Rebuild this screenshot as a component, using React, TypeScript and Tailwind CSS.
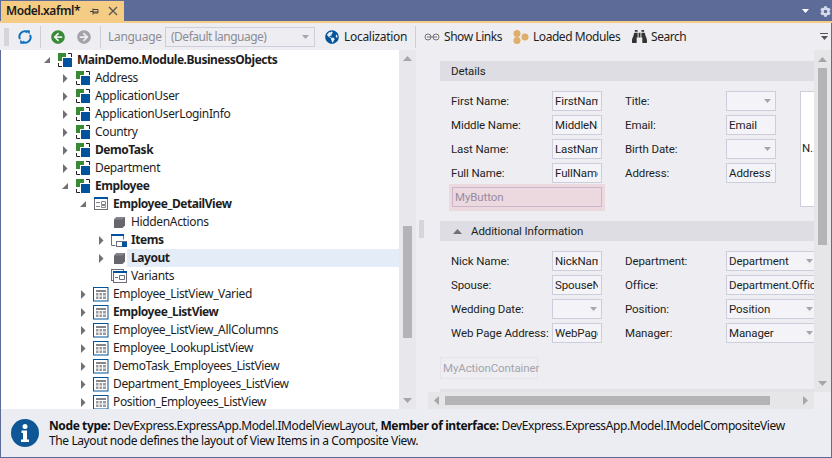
import React from 'react';
import { FaArrowCircleLeft, FaArrowCircleRight, FaBinoculars, FaCog, FaGlobeAmericas } from 'react-icons/fa';

const ClassIcon = () => (
  <svg width="16" height="16" viewBox="0 0 16 16">
    <rect x="1" y="1" width="8" height="8" fill="#388a34" />
    <path d="M11 1.500h3.500V5M1.500 11v3.500H5" fill="none" stroke="#222" />
    <rect x="5" y="5" width="10" height="10" fill="#fff" />
    <rect x="6" y="6" width="9" height="9" fill="#00539c" />
  </svg>
);

const DetailIcon = () => (
  <svg width="16" height="16" viewBox="0 0 16 16">
    <rect x="1.500" y="1.500" width="13" height="12" fill="#fff" stroke="#6d6d78" />
    <rect x="1" y="1" width="14" height="2" fill="#00539c" />
    <path d="M3 6.500h4M3 10.500h4M8.500 5.500h4v3h-4zM8.500 9.500h4v2h-4z" fill="none" stroke="#85858c" />
  </svg>
);

const CubeIcon = () => (
  <svg width="16" height="16" viewBox="0 0 16 16">
    <path d="M3 5.500L5.500 3H14v8.500L11.500 14H3z" fill="#66666c" />
    <path d="M3 5.500L5.500 3H14l-2.500 2.500z" fill="#85858c" />
  </svg>
);

const ItemsIcon = () => (
  <svg width="16" height="16" viewBox="0 0 16 16">
    <path d="M.5 13.500v-11h12v5" fill="none" stroke="#6d6d78" />
    <path d="M.5 13.500h4" stroke="#6d6d78" />
    <rect x="0" y="2" width="13" height="2" fill="#00539c" />
    <rect x="5.500" y="9.500" width="10" height="5" fill="#fff" stroke="#6d6d78" />
    <rect x="11" y="10" width="5" height="5" fill="#00539c" />
  </svg>
);

const VariantsIcon = () => (
  <svg width="16" height="16" viewBox="0 0 16 16">
    <rect x=".5" y="1.500" width="12" height="11" fill="#fff" stroke="#6d6d78" />
    <rect x="2.500" y="3.500" width="13" height="11" fill="#fff" stroke="#6d6d78" />
    <rect x="2" y="3" width="14" height="2" fill="#00539c" />
    <path d="M4 9.500h3M8.500 7.500h5v4h-5z" fill="none" stroke="#6d6d78" />
  </svg>
);

const ListIcon = () => (
  <svg width="16" height="16" viewBox="0 0 16 16">
    <rect x=".5" y="1.500" width="14.500" height="13.500" fill="#fff" stroke="#00539c" />
    <rect x="3" y="4" width="10" height="2" fill="#85858c" />
    <path d="M3 7h2.500v2.500H3zM6.500 7H9v2.500H6.500zM10 7h3v2.500h-3zM3 10.500h2.500V13H3zM6.500 10.500H9V13H6.500zM10 10.500h3V13h-3z" fill="#9a9aa0" />
  </svg>
);

const icons = {
  cls: <ClassIcon />,
  detail: <DetailIcon />,
  cube: <CubeIcon />,
  items: <ItemsIcon />,
  variants: <VariantsIcon />,
  list: <ListIcon />,
};

const indents = ['pl-[42px]', 'pl-[60px]', 'pl-[78px]', 'pl-[96px]'];

interface TreeRowProps {
  level: number;
  arrow?: 'closed' | 'open';
  icon: keyof typeof icons;
  text: string;
  bold?: boolean;
  selected?: boolean;
}

const TreeRow = ({ level, arrow, icon, text, bold, selected }: TreeRowProps) => (
  <div className={`flex items-center h-[18px] ${indents[level]}`}>
    <div className="w-[8px] mr-[6px] flex items-center justify-center">
      {arrow === 'closed' && (
        <svg width="6" height="9" viewBox="0 0 6 9"><path d="M1 0l4.500 4.500L1 9z" fill="#707076" /></svg>
      )}
      {arrow === 'open' && (
        <svg width="8" height="8" viewBox="0 0 8 8"><path d="M7 1v6H1z" fill="#707076" /></svg>
      )}
    </div>
    <div className="w-[16px] h-[16px]">{icons[icon]}</div>
    <div className={`flex-1 h-full pl-[4px] leading-[18px] ${bold ? 'font-bold tracking-[-0.45px]' : 'tracking-[-0.35px]'} ${selected ? 'bg-[#e3ecf7]' : ''}`}>{text}</div>
  </div>
);

const Grip = ({ className }: { className: string }) => (
  <div className={`bg-[radial-gradient(#b8b8c0_0.6px,transparent_0.8px)] bg-[length:2px_2px] ${className}`} />
);

const Sep = () => <div className="w-px h-[22px] bg-[#ccced8]" />;

const Arrow = ({ dir }: { dir: 'up' | 'down' | 'left' | 'right' }) => {
  const d = { up: 'M0 5L4.500 0 9 5z', down: 'M0 0h9L4.500 5z', left: 'M5 0v9L0 4.500z', right: 'M0 0l5 4.500L0 9z' }[dir];
  const vertical = dir === 'up' || dir === 'down';
  return (
    <svg width={vertical ? 9 : 5} height={vertical ? 5 : 9} viewBox={vertical ? '0 0 9 5' : '0 0 5 9'}>
      <path d={d} fill="#a5a5aa" />
    </svg>
  );
};

const Caret = ({ color = '#a5a5aa' }: { color?: string }) => (
  <svg width="7" height="4" viewBox="0 0 7 4"><path d="M0 0h7L3.500 4z" fill={color} /></svg>
);

const Field = ({ value, width = 'w-[50px]', select }: { value?: string; width?: string; select?: boolean }) => (
  <div className={`${width} h-[20px] shrink-0 flex items-center border border-[#cccedb] bg-[#f4f4f8] pl-[2px] pr-[3px] leading-[18px]`}>
    <span className="flex-1 overflow-hidden whitespace-nowrap">{value}</span>
    {select && <div className="shrink-0 flex items-center pr-[1px]"><Caret /></div>}
  </div>
);

const FormRow = ({ label, children }: { label: string; children: React.ReactNode }) => (
  <div className="flex items-center h-[20px]">
    <div className="w-[101px] shrink-0 whitespace-nowrap pt-px">{label}</div>
    {children}
  </div>
);

const SectionHeader = ({ children }: { children: React.ReactNode }) => (
  <div className="h-[20px] ml-[11px] bg-[#dddde3] flex items-center">{children}</div>
);

export default function App() {
  return (
    <div className="w-[832px] h-[458px] overflow-hidden flex flex-col bg-[#5d6b99] text-[12px] text-[#1e1e1e] font-['Noto_Sans',sans-serif] tracking-[-0.3px]">
      {/* title bar */}
      <div className="h-[21px] shrink-0 flex items-end justify-between">
        <div className="h-[20px] w-[123px] ml-px bg-[#f5cc84] flex items-center pl-[5px] text-[#1a1a1a] font-semibold tracking-[-0.45px]">
          <span className="w-[82px]">Model.xafml*</span>
          <svg width="11" height="11" viewBox="0 0 11 11" className="ml-[1px]">
            <path d="M1 5.500h3M4 2.500v6M4 3.500h5v3.500H4M4 6h5" fill="none" stroke="#444" />
          </svg>
          <svg width="10" height="10" viewBox="0 0 10 10" className="ml-[8px]">
            <path d="M1 1l8 8M9 1l-8 8" stroke="#555" strokeWidth="1.3" />
          </svg>
        </div>
        <div className="flex items-center gap-[11px] pr-[1px] h-[20px] text-white">
          <Caret color="#fff" />
          <FaCog size={11} color="#d8dcea" />
        </div>
      </div>
      <div className="h-[2px] shrink-0 bg-[#f5cc84]" />

      {/* toolbar */}
      <div className="h-[27px] shrink-0 bg-[#eeeef2] flex items-center whitespace-nowrap border-r border-[#5d6b99]">
        <Grip className="w-[5px] h-[18px] ml-[4px]" />
        <svg width="14" height="14" viewBox="0 0 14 14" className="ml-[9px]">
          <path d="M2 9A5.200 5.200 0 0 1 9.500 2.300M12 5A5.200 5.200 0 0 1 4.500 11.700" fill="none" stroke="#0e70c0" strokeWidth="2" />
          <path d="M8 0l4 .5-.5 4zM6 14l-4-.5.5-4z" fill="#0e70c0" />
        </svg>
        <div className="ml-[8px]"><Sep /></div>
        <div className="ml-[10px]"><FaArrowCircleLeft size={14} color="#388a34" /></div>
        <div className="ml-[12px]"><FaArrowCircleRight size={14} color="#a3a3a8" /></div>
        <div className="ml-[9px]"><Sep /></div>
        <span className="ml-[7px] w-[57px] text-[#8c8c94]">Language</span>
        <div className="w-[150px] h-[20px] border border-[#cccedb] flex items-center justify-between pl-[5px] pr-[5px] text-[#8c8c94] tracking-[-0.5px]">
          <span>(Default language)</span>
          <Caret />
        </div>
        <div className="ml-[10px]"><FaGlobeAmericas size={14} color="#00539c" /></div>
        <span className="ml-[5px] w-[64px]">Localization</span>
        <div className="ml-[7px]"><Sep /></div>
        <svg width="16" height="8" viewBox="0 0 16 8" className="ml-[8px]">
          <circle cx="4" cy="4" r="3" fill="none" stroke="#707076" />
          <circle cx="12" cy="4" r="3" fill="none" stroke="#707076" />
          <path d="M3 4h10" stroke="#707076" />
        </svg>
        <span className="ml-[4px] w-[59px] tracking-[-0.45px]">Show Links</span>
        <svg width="16" height="14" viewBox="0 0 16 14" className="ml-[10px]">
          <circle cx="4" cy="3.500" r="3.500" fill="#dfae6a" />
          <circle cx="4" cy="10.500" r="3.500" fill="#dfae6a" />
          <circle cx="12" cy="7" r="3.500" fill="#dfae6a" />
        </svg>
        <span className="ml-[4px] w-[89px] tracking-[-0.45px]">Loaded Modules</span>
        <div className="ml-[10px]"><FaBinoculars size={15} color="#333" /></div>
        <span className="ml-[4px] tracking-[-0.45px]">Search</span>
        <div className="ml-auto mr-[3px] flex flex-col items-center gap-[2px]">
          <div className="w-[8px] h-px bg-[#555]" />
          <Caret color="#555" />
        </div>
      </div>

      {/* main area */}
      <div className="h-[359px] shrink-0 flex bg-[#eeeef2] border-x border-[#5d6b99]">
        <div className="w-[398px] shrink-0 bg-white overflow-hidden pt-px">
          <TreeRow level={0} arrow="open" icon="cls" text="MainDemo.Module.BusinessObjects" bold />
          <TreeRow level={1} arrow="closed" icon="cls" text="Address" />
          <TreeRow level={1} arrow="closed" icon="cls" text="ApplicationUser" />
          <TreeRow level={1} arrow="closed" icon="cls" text="ApplicationUserLoginInfo" />
          <TreeRow level={1} arrow="closed" icon="cls" text="Country" />
          <TreeRow level={1} arrow="closed" icon="cls" text="DemoTask" bold />
          <TreeRow level={1} arrow="closed" icon="cls" text="Department" />
          <TreeRow level={1} arrow="open" icon="cls" text="Employee" bold />
          <TreeRow level={2} arrow="open" icon="detail" text="Employee_DetailView" bold />
          <TreeRow level={3} icon="cube" text="HiddenActions" />
          <TreeRow level={3} arrow="closed" icon="items" text="Items" bold />
          <TreeRow level={3} arrow="closed" icon="cube" text="Layout" bold selected />
          <TreeRow level={3} icon="variants" text="Variants" />
          <TreeRow level={2} arrow="closed" icon="list" text="Employee_ListView_Varied" />
          <TreeRow level={2} arrow="closed" icon="list" text="Employee_ListView" bold />
          <TreeRow level={2} arrow="closed" icon="list" text="Employee_ListView_AllColumns" />
          <TreeRow level={2} arrow="closed" icon="list" text="Employee_LookupListView" />
          <TreeRow level={2} arrow="closed" icon="list" text="DemoTask_Employees_ListView" />
          <TreeRow level={2} arrow="closed" icon="list" text="Department_Employees_ListView" />
          <TreeRow level={2} arrow="closed" icon="list" text="Position_Employees_ListView" />
        </div>

        {/* tree scrollbar */}
        <div className="w-[17px] shrink-0 bg-[#e8e8ec] flex flex-col items-center">
          <div className="h-[17px] flex items-center"><Arrow dir="up" /></div>
          <div className="h-[159px]" />
          <div className="w-[9px] h-[112px] bg-[#b4b4b6]" />
          <div className="flex-1" />
          <div className="h-[17px] flex items-center"><Arrow dir="down" /></div>
        </div>

        {/* splitter */}
        <div className="w-[13px] shrink-0 flex items-center pl-[3px]">
          <Grip className="w-[5px] h-[18px] mt-[-1px]" />
        </div>

        {/* layout panel */}
        <div className="w-[402px] shrink-0 flex flex-col">
          <div className="h-[342px] shrink-0 flex">
            <div className="w-[385px] shrink-0 overflow-hidden pt-[11px] text-[11.5px] tracking-[-0.1px] font-['Roboto',sans-serif]">
              <SectionHeader><span className="pl-[11px] pt-px">Details</span></SectionHeader>
              <div className="flex pl-[22px] pt-[10px]">
                <div className="w-[174px] shrink-0 flex flex-col gap-[4px]">
                  <FormRow label="First Name:"><Field value="FirstName" /></FormRow>
                  <FormRow label="Middle Name:"><Field value="MiddleName" /></FormRow>
                  <FormRow label="Last Name:"><Field value="LastName" /></FormRow>
                  <FormRow label="Full Name:"><Field value="FullName" /></FormRow>
                  <div className="w-[156px] h-[27px] ml-[-2px] mt-[-3px] p-[3px] bg-[#ecd9e0]">
                    <div className="h-[20px] border border-[#cbb5cb] pl-[2px] leading-[18px] text-[#9a8a9c]">MyButton</div>
                  </div>
                </div>
                <div className="w-[175px] shrink-0 flex flex-col gap-[4px]">
                  <FormRow label="Title:"><Field select /></FormRow>
                  <FormRow label="Email:"><Field value="Email" /></FormRow>
                  <FormRow label="Birth Date:"><Field select /></FormRow>
                  <FormRow label="Address:"><Field value="Address1" /></FormRow>
                </div>
                <div className="w-[40px] h-[116px] shrink-0 bg-white border border-[#cccedb] flex items-center pl-px">N...</div>
              </div>
              <div className="mt-[10px]">
                <SectionHeader>
                  <div className="pl-[13px] w-[31px]">
                    <svg width="9" height="5" viewBox="0 0 9 5"><path d="M0 5L4.500 0 9 5z" fill="#707076" /></svg>
                  </div>
                  <span className="pt-px">Additional Information</span>
                </SectionHeader>
              </div>
              <div className="flex pl-[22px] pt-[10px]">
                <div className="w-[174px] shrink-0 flex flex-col gap-[4px]">
                  <FormRow label="Nick Name:"><Field value="NickName" /></FormRow>
                  <FormRow label="Spouse:"><Field value="SpouseName" /></FormRow>
                  <FormRow label="Wedding Date:"><Field select /></FormRow>
                  <FormRow label="Web Page Address:"><Field value="WebPageAddress" /></FormRow>
                </div>
                <div className="w-[215px] shrink-0 flex flex-col gap-[4px]">
                  <FormRow label="Department:"><Field value="Department" width="w-[92px]" select /></FormRow>
                  <FormRow label="Office:"><Field value="Department.Office" width="w-[108px]" /></FormRow>
                  <FormRow label="Position:"><Field value="Position" width="w-[92px]" select /></FormRow>
                  <FormRow label="Manager:"><Field value="Manager" width="w-[92px]" select /></FormRow>
                </div>
              </div>
              <div className="ml-[11px] mt-[14px] w-[98px] h-[22px] border border-[#e4e4ea] pl-[2px] leading-[20px] text-[#a4a4aa]">MyActionContainer</div>
              <div className="ml-[11px] mt-[10px] h-[3px] bg-[#e2e2e6]" />
            </div>

            {/* vertical scrollbar */}
            <div className="w-[17px] shrink-0 bg-[#e6e6e9] flex flex-col items-center">
              <div className="h-[18px] flex items-center"><Arrow dir="up" /></div>
              <div className="w-[9px] h-[177px] bg-[#b4b4b6]" />
              <div className="flex-1" />
              <div className="h-[17px] flex items-center"><Arrow dir="down" /></div>
            </div>
          </div>

          {/* horizontal scrollbar */}
          <div className="h-[17px] shrink-0 w-[386px] ml-[-1px] bg-[#e6e6e9] flex items-center">
            <div className="w-[17px] flex justify-center"><Arrow dir="left" /></div>
            <div className="w-[325px] h-[9px] bg-[#b4b4b6]" />
            <div className="flex-1" />
            <div className="w-[17px] flex justify-center"><Arrow dir="right" /></div>
          </div>
        </div>
      </div>

      {/* status */}
      <div className="h-[48px] shrink-0 bg-[#ecedf3] border-x border-[#5d6b99] flex items-center pl-[10px] tracking-[-0.4px]">
        <svg width="28" height="28" viewBox="0 0 28 28" className="shrink-0">
          <circle cx="14" cy="14" r="14" fill="#0e5696" />
          <circle cx="14" cy="7.500" r="2.500" fill="#fff" />
          <path d="M10.500 11.500h5.500v9h2v2.500h-8v-2.500h2v-6.500h-1.500z" fill="#fff" />
        </svg>
        <div className="ml-[10px] leading-[15px] text-[#111] whitespace-nowrap">
          <div><b>Node type:</b> DevExpress.ExpressApp.Model.IModelViewLayout, <b>Member of interface:</b> DevExpress.ExpressApp.Model.IModelCompositeView</div>
          <div>The Layout node defines the layout of View Items in a Composite View.</div>
        </div>
      </div>
      <div className="h-px shrink-0" />
    </div>
  );
}
